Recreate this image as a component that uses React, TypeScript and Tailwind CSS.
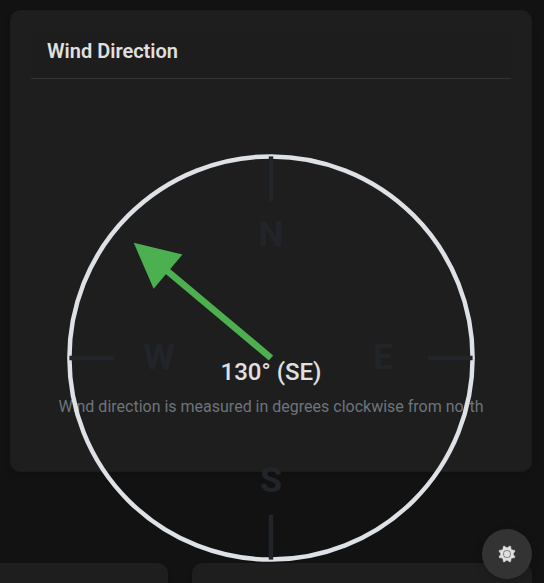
import { FaSun } from "react-icons/fa6";

function Compass({ degrees }: { degrees: number }) {
  return (
    <svg
      viewBox="0 0 200 200"
      className="pointer-events-none absolute top-[123px] left-[36px] h-[448px] w-[448px] overflow-visible font-['Roboto',sans-serif]"
    >
      <circle cx="100" cy="100" r="90" fill="none" stroke="#dee2e6" strokeWidth="2" />
      <g stroke="#212529" strokeWidth="2">
        <line x1="100" y1="10" x2="100" y2="30" />
        <line x1="100" y1="170" x2="100" y2="190" />
        <line x1="10" y1="100" x2="30" y2="100" />
        <line x1="170" y1="100" x2="190" y2="100" />
      </g>
      <g fill="#212529" fontSize="16" fontWeight="700" textAnchor="middle">
        <text x="100" y="50">N</text>
        <text x="150" y="105">E</text>
        <text x="100" y="160">S</text>
        <text x="50" y="105">W</text>
      </g>
      <g transform={`rotate(${degrees + 180} 100 100)`}>
        <line x1="100" y1="100" x2="100" y2="38" stroke="#4caf50" strokeWidth="3" />
        <polygon points="100,20 90,40 110,40" fill="#4caf50" />
      </g>
    </svg>
  );
}

export default function App() {
  return (
    <div className="relative h-[583px] w-[544px] overflow-hidden bg-[#121212] font-['Roboto',sans-serif] text-[#e0e0e0]">
      <div className="flex h-full flex-col pt-[10px]">
        <section className="relative z-10 ml-[10px] h-[462px] w-[522px] shrink-0 rounded-[10px] border border-[#1b1b1b] bg-[#1e1e1e] p-5 shadow-[0_4px_6px_rgba(0,0,0,0.1)]">
          <header className="h-[48px] rounded-t-[6px] border-b border-[#333333] bg-black/[0.03] px-4 pt-2">
            <h2 className="text-[20px] leading-6 font-semibold">Wind Direction</h2>
          </header>
          <div className="pt-[279px] text-center">
            <p className="text-[24px] leading-[29px] font-medium">130° (SE)</p>
            <p className="mt-2 text-[16px] leading-6 whitespace-nowrap text-[#6c757d]">
              Wind direction is measured in degrees clockwise from north
            </p>
          </div>
          <Compass degrees={130} />
        </section>
        <div className="mt-[91px] flex shrink-0 gap-6">
          <div className="h-10 w-[168px] rounded-tr-[10px] bg-[#1e1e1e] shadow-[0_4px_6px_rgba(0,0,0,0.1)]" />
          <div className="h-10 w-[340px] rounded-t-[10px] bg-[#1e1e1e] shadow-[0_4px_6px_rgba(0,0,0,0.1)]" />
        </div>
      </div>
      <button
        aria-label="Toggle theme"
        className="absolute top-[529px] left-[482px] z-20 flex size-[50px] items-center justify-center rounded-full bg-[#333333] shadow-[0_2px_10px_rgba(0,0,0,0.2)]"
      >
        <FaSun className="size-4 overflow-visible stroke-current stroke-[18px]" />
      </button>
    </div>
  );
}
